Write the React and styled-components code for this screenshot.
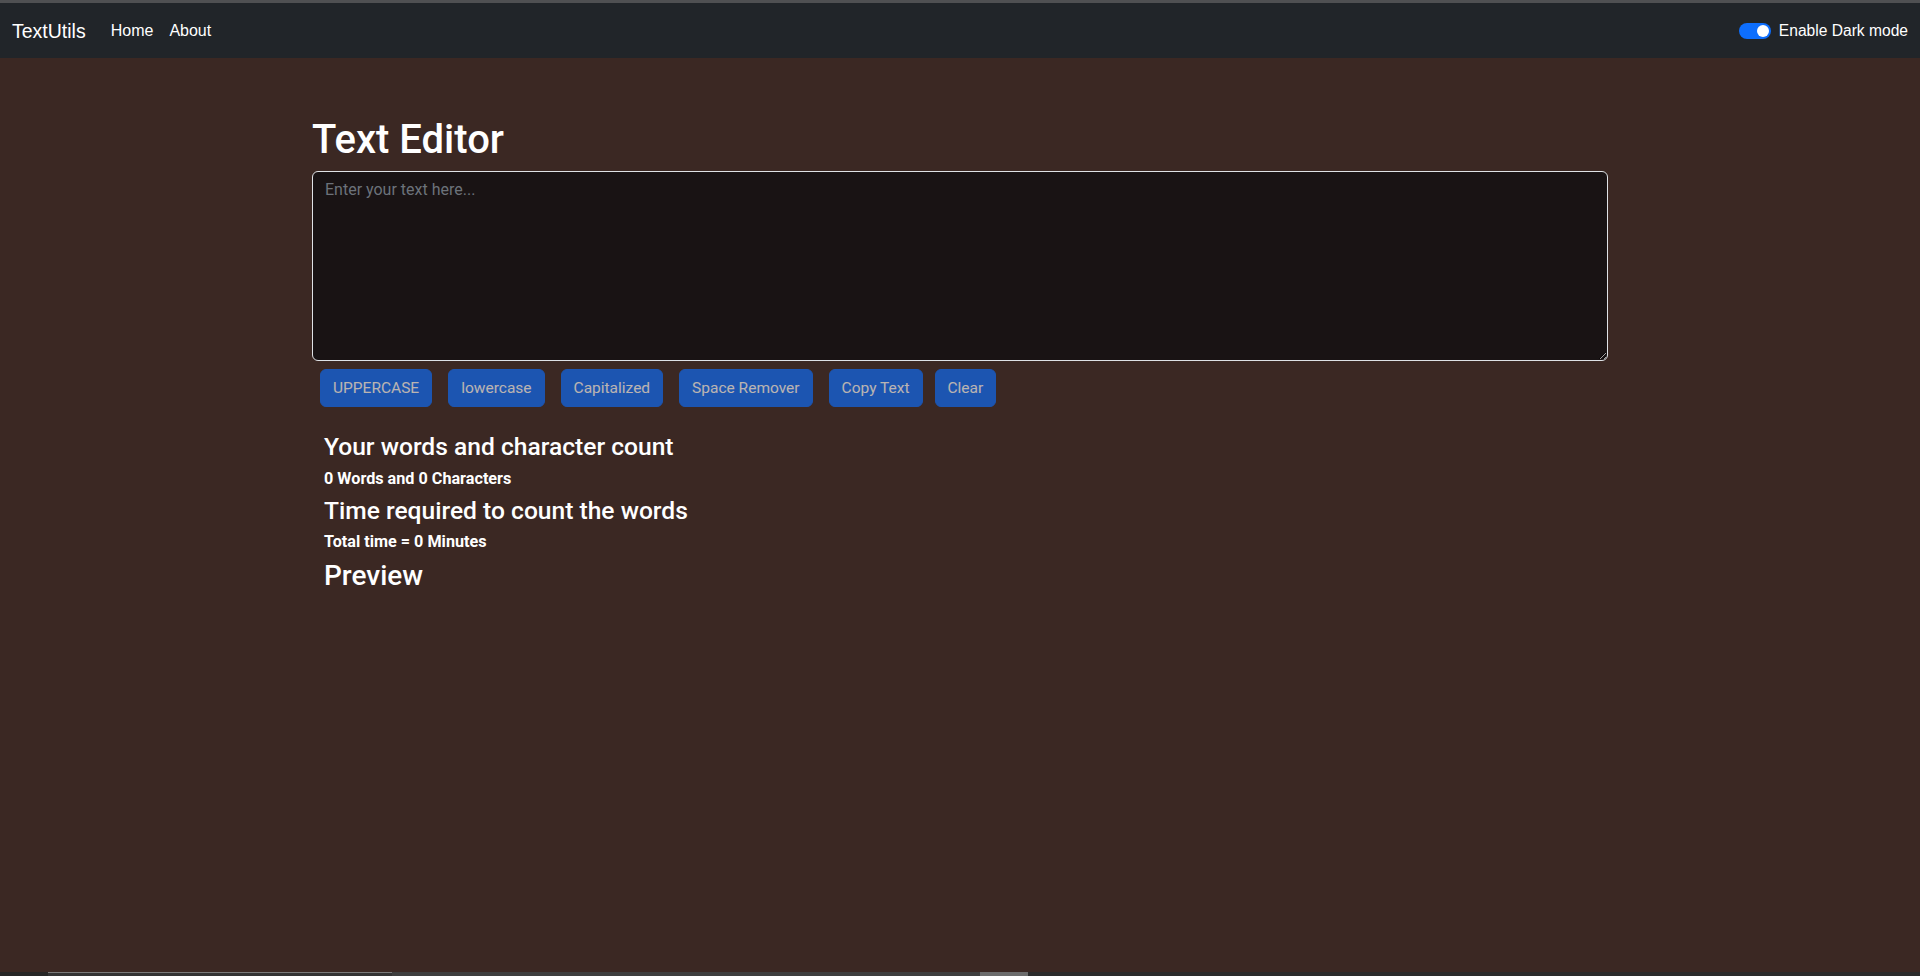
import React, { useState } from 'react';
import styled, { createGlobalStyle } from 'styled-components';

const GlobalStyle = createGlobalStyle`
  * {
    box-sizing: border-box;
  }
  body {
    margin: 0;
    background-color: #3b2823;
    color: #fff;
    font-family: Roboto, "Liberation Sans", Arial, sans-serif;
  }
`;

const Page = styled.div`
  display: flex;
  flex-direction: column;
  min-height: 100vh;
`;

const Navbar = styled.nav`
  display: flex;
  align-items: center;
  justify-content: space-between;
  height: 58px;
  padding: 0 12px;
  background-color: #212529;
  border-top: 3px solid #4f5052;
  font-family: "Liberation Sans", Arial, sans-serif;
`;

const NavLeft = styled.div`
  display: flex;
  align-items: center;
`;

const Brand = styled.a`
  font-size: 19.5px;
  line-height: 30px;
  color: #fff;
  margin-right: 17px;
  text-decoration: none;
`;

const NavLink = styled.a`
  font-size: 16px;
  line-height: 24px;
  padding: 8px;
  color: #fff;
  text-decoration: none;
`;

const SwitchLabel = styled.label`
  display: flex;
  align-items: center;
  gap: 8px;
  font-size: 15.6px;
  color: #fff;
  cursor: pointer;
`;

const SwitchTrack = styled.span`
  position: relative;
  width: 32px;
  height: 16px;
  border-radius: 8px;
  background-color: ${(p) => (p.on ? '#0d6efd' : '#6c757d')};
`;

const SwitchKnob = styled.span`
  position: absolute;
  top: 2px;
  left: ${(p) => (p.on ? '18px' : '2px')};
  width: 12px;
  height: 12px;
  border-radius: 50%;
  background-color: #fff;
`;

const Main = styled.main`
  flex: 1;
  width: 1296px;
  margin: 0 auto;
  padding-top: 58px;
`;

const Title = styled.h1`
  font-size: 40px;
  line-height: 48px;
  font-weight: 500;
  margin: 0 0 7px;
`;

const TextArea = styled.textarea`
  display: block;
  width: 100%;
  height: 190px;
  padding: 6px 12px;
  font-family: inherit;
  font-size: 16px;
  line-height: 24px;
  color: #fff;
  background-color: #191314;
  border: 1px solid #dfe2e6;
  border-radius: 6px;
  resize: vertical;
  outline: none;

  &::placeholder {
    color: #6c727a;
  }
`;

const ButtonRow = styled.div`
  display: flex;
  margin-top: 8px;
`;

const ActionButton = styled.button`
  height: 38px;
  margin: 0 ${(p) => (p.tight ? '4px' : '8px')};
  padding: 6px 12px;
  font-family: inherit;
  font-size: 15.5px;
  line-height: 24px;
  color: #fff;
  background-color: #0d6efd;
  border: 1px solid #0d6efd;
  border-radius: 6px;

  &:disabled {
    opacity: 0.65;
  }
`;

const Summary = styled.section`
  margin-top: 25px;
  padding: 0 12px;
`;

const Heading = styled.h4`
  font-size: ${(p) => (p.big ? '28px' : '24.6px')};
  line-height: 1.2;
  font-weight: 500;
  margin: ${(p) => (p.big ? '3px' : '0')} 0 5px;
`;

const Stat = styled.p`
  font-size: 16.2px;
  line-height: 24px;
  font-weight: 700;
  margin: 0 0 5px;
`;

const ScrollStrip = styled.div`
  display: flex;
  height: 4px;
  background-color: #2b2b2b;
`;

const StripPart = styled.span`
  width: ${(p) => p.w}px;
  background-color: ${(p) => p.c};
  border-top: ${(p) => (p.edge ? '1px solid #7a7a7a' : 'none')};
`;

const buttons = ['UPPERCASE', 'lowercase', 'Capitalized', 'Space Remover', 'Copy Text'];

export default function App() {
  const [text, setText] = useState('');
  const [dark, setDark] = useState(true);

  const words = text.split(/\s+/).filter((w) => w.length > 0).length;

  return (
    <Page>
      <GlobalStyle />
      <Navbar>
        <NavLeft>
          <Brand href="#">TextUtils</Brand>
          <NavLink href="#">Home</NavLink>
          <NavLink href="#">About</NavLink>
        </NavLeft>
        <SwitchLabel onClick={() => setDark(!dark)}>
          <SwitchTrack on={dark ? 1 : 0}>
            <SwitchKnob on={dark ? 1 : 0} />
          </SwitchTrack>
          Enable Dark mode
        </SwitchLabel>
      </Navbar>

      <Main>
        <Title>Text Editor</Title>
        <TextArea
          placeholder="Enter your text here..."
          value={text}
          onChange={(e) => setText(e.target.value)}
        />
        <ButtonRow>
          {buttons.map((b) => (
            <ActionButton key={b} disabled={text.length === 0}>
              {b}
            </ActionButton>
          ))}
          <ActionButton tight disabled={text.length === 0}>
            Clear
          </ActionButton>
        </ButtonRow>

        <Summary>
          <Heading>Your words and character count</Heading>
          <Stat>{words} Words and {text.length} Characters</Stat>
          <Heading>Time required to count the words</Heading>
          <Stat>Total time = {0.008 * words} Minutes</Stat>
          <Heading as="h3" big>Preview</Heading>
        </Summary>
      </Main>

      <ScrollStrip>
        <StripPart w={48} c="#262626" />
        <StripPart w={344} c="#333333" edge />
        <StripPart w={588} c="#3e3e3e" />
        <StripPart w={48} c="#6c6c6c" />
      </ScrollStrip>
    </Page>
  );
}
